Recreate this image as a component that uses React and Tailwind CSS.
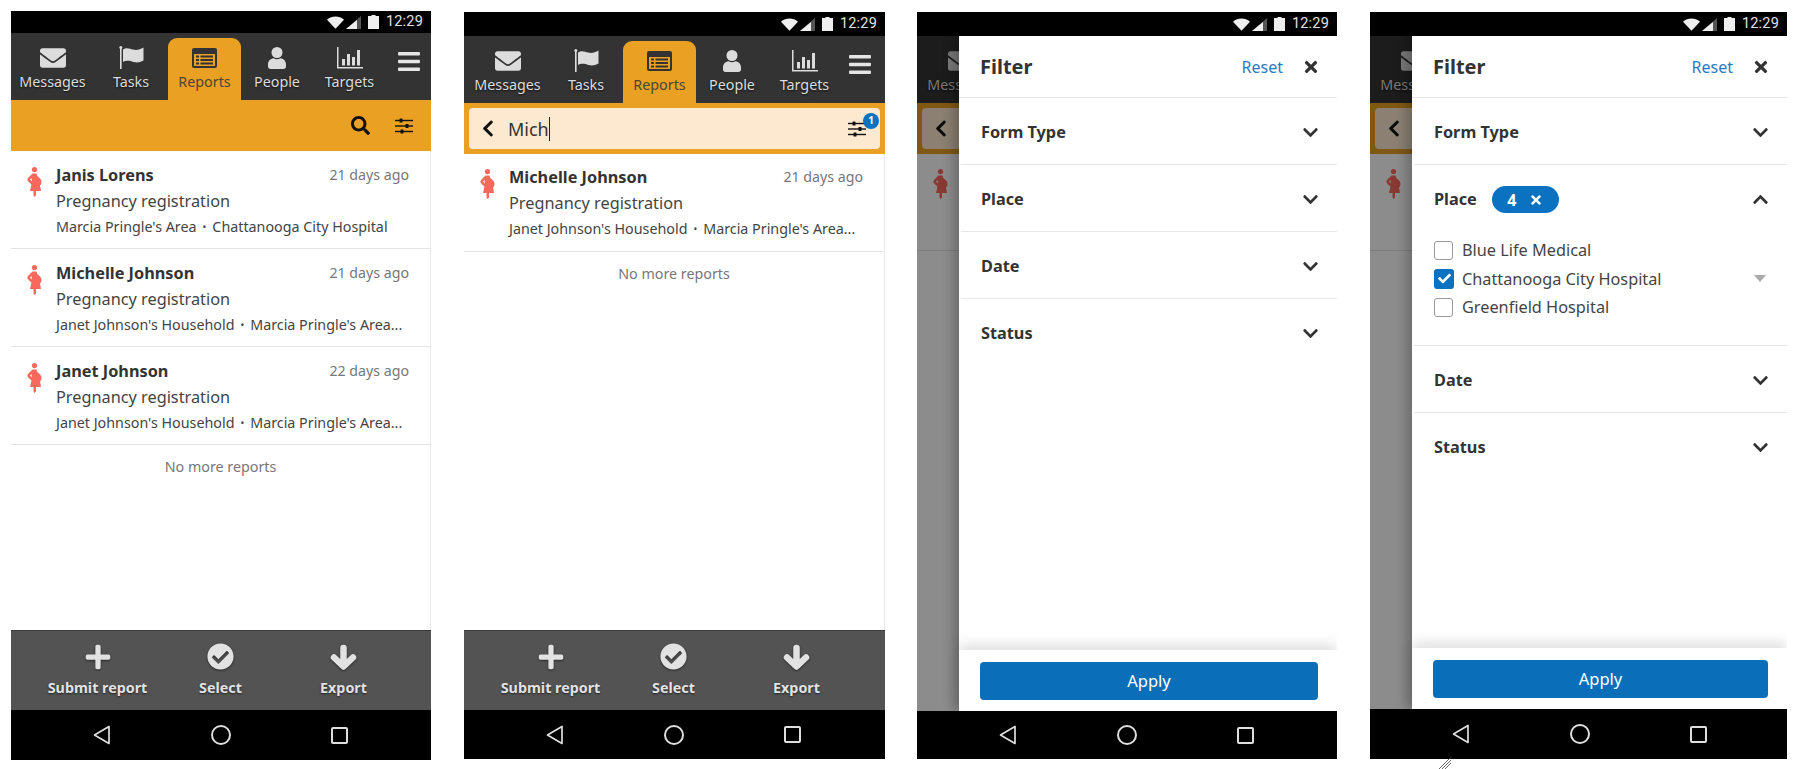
import { FaBars, FaCheck, FaCheckCircle, FaChevronDown, FaChevronLeft, FaChevronUp, FaEnvelope, FaPlus, FaSearch, FaTimes } from "react-icons/fa";

const TABS = [
  { label: "Messages", width: "w-[83px]", icon: <FaEnvelope className="w-[26px] h-[26px]" /> },
  { label: "Tasks", width: "w-[74px]", icon: <FlagIcon /> },
  { label: "Reports", width: "w-[73px]", icon: <ReportsIcon /> },
  { label: "People", width: "w-[72px]", icon: <PersonIcon /> },
  { label: "Targets", width: "w-[73px]", icon: <TargetsIcon /> },
];

const JANET_SUB = ["Janet Johnson's Household", "Marcia Pringle's Area..."];

function FlagIcon() {
  return (
    <svg width="25" height="23" viewBox="0 0 25 23" fill="currentColor">
      <rect x="1" y="1" width="1.6" height="22" />
      <circle cx="1.8" cy="1.6" r="1.5" />
      <path d="M4 3.5C8 1 11 3 14 3.6 18 4.4 21 3.6 24.5 1.5V14.5C21 16.5 18 17 14.5 16 11 15 8 14 4 16Z" />
    </svg>
  );
}

function ReportsIcon() {
  return (
    <svg width="25" height="20" viewBox="0 0 25 20">
      <rect width="25" height="20" rx="2" fill="#333" />
      <rect x="2" y="6" width="21" height="12" fill="#e9a023" />
      <g fill="#333">
        <rect x="4" y="7.5" width="3" height="2" />
        <rect x="4" y="11" width="3" height="2" />
        <rect x="4" y="14.5" width="3" height="2" />
        <rect x="8.5" y="7.5" width="12.5" height="2" />
        <rect x="8.5" y="11" width="12.5" height="2" />
        <rect x="8.5" y="14.5" width="12.5" height="2" />
      </g>
    </svg>
  );
}

function PersonIcon() {
  return (
    <svg width="18" height="22" viewBox="0 0 18 22" fill="currentColor">
      <circle cx="9" cy="5.5" r="5.5" />
      <path d="M5.5 11.2C7.5 12.6 10.5 12.6 12.5 11.2 15.8 11.8 18 14 18 17.5V19.5C18 21 17 22 15.5 22H2.5C1 22 0 21 0 19.5V17.5C0 14 2.2 11.8 5.5 11.2Z" />
    </svg>
  );
}

function TargetsIcon() {
  return (
    <svg width="26" height="22" viewBox="0 0 26 22" fill="currentColor">
      <rect x="0" y="0" width="1.5" height="21" />
      <rect x="0" y="20" width="26" height="1.5" />
      <rect x="5" y="12" width="3" height="6.5" />
      <rect x="10" y="7" width="3" height="11.5" />
      <rect x="15" y="10" width="3" height="8.5" />
      <rect x="20" y="3" width="3" height="15.5" />
    </svg>
  );
}

function ArrowIcon() {
  return (
    <svg width="27" height="26" viewBox="0 0 27 26" fill="none" stroke="currentColor" strokeWidth="6.5" strokeLinecap="round" strokeLinejoin="round">
      <path d="M13.5 4V21M4 13.5L13.5 22.5 23 13.5" />
    </svg>
  );
}

function SlidersIcon() {
  return (
    <svg width="18" height="16" viewBox="0 0 18 16" fill="#111">
      <rect y="1.8" width="18" height="1.4" />
      <rect y="7.3" width="18" height="1.4" />
      <rect y="12.8" width="18" height="1.4" />
      <rect x="4.5" y="0.5" width="3" height="4" rx="0.5" />
      <rect x="10.5" y="6" width="3" height="4" rx="0.5" />
      <rect x="5.5" y="11.5" width="3" height="4" rx="0.5" />
    </svg>
  );
}

function PregnantIcon() {
  return (
    <svg width="15" height="30" viewBox="0 0 15 30" fill="#f7695c">
      <circle cx="7.5" cy="2.6" r="2.6" />
      <path d="M5.5 6.5H9.5C10 8.5 10.5 9.5 12 10.5 15 12.5 15.2 16.5 13 18.5L14 24H9V28.5L7.5 30 6.5 28.5V24H3L4.5 17.5C2.5 16 0 14 0.3 12.6 1 10.5 3.5 8.5 5.5 6.5ZM4.5 11L3 12.6 5 14.4Z" fillRule="evenodd" />
    </svg>
  );
}

function StatusBar({ height }) {
  return (
    <div className={`${height} bg-black shrink-0 flex items-center justify-end gap-[2px] pr-[8px] text-[#e2e2e2]`}>
      <svg width="17" height="13" viewBox="0 0 18 13" fill="#eee">
        <path d="M0 3.5C5 -1 13 -1 18 3.5L9 13Z" />
      </svg>
      <svg width="15" height="13" viewBox="0 0 15 13" className="mr-[5px]">
        <path d="M15 0V13H0Z" fill="#555" />
        <path d="M11 4V13H0Z" fill="#eee" />
      </svg>
      <svg width="11" height="14" viewBox="0 0 11 14" fill="#eee" className="mr-[5px]">
        <path d="M3.5 0H7.5V1H11V14H0V1H3.5Z" />
      </svg>
      <span className="font-['Roboto',sans-serif] text-[14.5px] leading-none tracking-[0.2px]">12:29</span>
    </div>
  );
}

function NavTab({ tab }) {
  const active = tab.label === "Reports";
  return (
    <div className={`${tab.width} shrink-0 flex flex-col items-center justify-end pb-[8px] ${active ? "bg-[#e9a023] rounded-t-[9px] mt-[5px] text-[#4b4636]" : "text-[#dcdcdc]"}`}>
      <div className="h-[23px] flex items-center justify-center">{tab.icon}</div>
      <span className={`text-[14.3px] leading-[20px] mt-[3px] ${active ? "" : "[text-shadow:0_1px_2px_rgba(0,0,0,0.7)]"}`}>{tab.label}</span>
    </div>
  );
}

function TopNav({ shifted }) {
  return (
    <div className={`h-[67px] bg-[#333333] shrink-0 flex items-stretch ${shifted ? "pl-[2px]" : ""}`}>
      {TABS.map((tab) => (
        <NavTab key={tab.label} tab={tab} />
      ))}
      <div className={`flex-1 flex justify-center pt-[16px] text-[#e6e6e6] ${shifted ? "pr-[7px]" : ""}`}>
        <FaBars className="w-[22px] h-[25px]" />
      </div>
    </div>
  );
}

function ActionBar() {
  const items = [
    { label: "Submit report", icon: <FaPlus className="w-[28px] h-[28px]" /> },
    { label: "Select", icon: <FaCheckCircle className="w-[27px] h-[27px]" /> },
    { label: "Export", icon: <ArrowIcon /> },
  ];
  return (
    <div className="h-[80px] shrink-0 bg-[#535353] border-t border-[#3c3c3c] flex pl-[25px]">
      {items.map((item) => (
        <div key={item.label} className="w-[123px] flex flex-col items-center pt-[12px] text-[#e2e2e2] [text-shadow:0_1px_2px_rgba(0,0,0,0.6)]">
          <div className="h-[27px] flex items-center justify-center drop-shadow-[0_1px_1px_rgba(0,0,0,0.5)]">{item.icon}</div>
          <span className="text-[14.3px] font-bold leading-[20px] mt-[8px] whitespace-nowrap">{item.label}</span>
        </div>
      ))}
    </div>
  );
}

function SoftNav({ height }) {
  return (
    <div className={`${height} bg-black shrink-0 flex items-center pl-[31px]`}>
      <div className="w-[119px] flex justify-center">
        <svg width="18" height="20" viewBox="0 0 18 20" fill="none" stroke="#dedede" strokeWidth="1.7" strokeLinejoin="round">
          <path d="M16 1.5V18.5L1.5 10Z" />
        </svg>
      </div>
      <div className="w-[119px] flex justify-center">
        <div className="w-[20px] h-[20px] rounded-full border-[2px] border-[#dedede]" />
      </div>
      <div className="w-[119px] flex justify-center">
        <div className="w-[17px] h-[17px] rounded-[2px] border-[2px] border-[#dedede]" />
      </div>
    </div>
  );
}

function ReportRow({ name, date, sub, compact }) {
  return (
    <div className={`shrink-0 border-b border-[#e4e4e4] flex pl-[16px] pr-[21px] ${compact ? "h-[98px] pt-[12px]" : "h-[98px] pt-[13px]"}`}>
      <div className="w-[29px] shrink-0 pt-[3px]">
        <PregnantIcon />
      </div>
      <div className="flex-1 min-w-0">
        <div className="flex items-center justify-between h-[22px]">
          <span className="text-[16.3px] font-bold text-[#333] leading-[22px]">{name}</span>
          <span className="text-[14.2px] text-[#777] leading-[22px]">{date}</span>
        </div>
        <div className="text-[16.3px] text-[#444] leading-[22px] mt-[4px]">Pregnancy registration</div>
        <div className="text-[14.3px] text-[#444] leading-[20px] mt-[5px] whitespace-nowrap flex items-center">
          <span>{sub[0]}</span>
          <span className="mx-[6px] text-[10px]">•</span>
          <span>{sub[1]}</span>
        </div>
      </div>
    </div>
  );
}

function NoMore() {
  return <div className="text-center text-[14.3px] text-[#777] leading-[20px] pt-[12px]">No more reports</div>;
}

function OrangeBand() {
  return (
    <div className="h-[51px] shrink-0 bg-[#e9a023] flex items-center justify-end pr-[18px] gap-[25px]">
      <FaSearch className="w-[19px] h-[19px] text-[#111]" />
      <SlidersIcon />
    </div>
  );
}

function SearchBand({ children }) {
  return (
    <div className="h-[51px] shrink-0 bg-[#e9a023] p-[5px]">
      <div className="h-[41px] rounded-[4px] bg-[#fde9d0] flex items-center pl-[12px] pr-[14px]">
        <FaChevronLeft className="w-[14px] h-[19px] text-[#111] shrink-0" />
        {children}
      </div>
    </div>
  );
}

function FilterRow({ label, extra, open, children }) {
  const Chevron = open ? FaChevronUp : FaChevronDown;
  return (
    <div className="border-b border-[#e6e6e6] ml-[2px] last:border-b-0">
      <div className="h-[66px] flex items-center pl-[20px] pr-[18px] pt-[3px]">
        <span className="text-[16.3px] font-bold text-[#333]">{label}</span>
        {extra}
        <Chevron className="ml-auto w-[17px] h-[17px] text-[#333]" />
      </div>
      {children}
    </div>
  );
}

function PlaceOption({ label, checked, caret }) {
  return (
    <div className="h-[28.5px] flex items-center pl-[20px] pr-[21px]">
      {checked ? (
        <span className="w-[20px] h-[20px] rounded-[3px] bg-[#0a72c0] flex items-center justify-center mr-[8px]">
          <FaCheck className="w-[13px] h-[13px] text-white" />
        </span>
      ) : (
        <span className="w-[19px] h-[19px] rounded-[3px] border-[1.5px] border-[#9a9a9a] mr-[9px]" />
      )}
      <span className="text-[16.3px] text-[#444]">{label}</span>
      {caret && <span className="ml-auto w-0 h-0 border-x-[6px] border-x-transparent border-t-[7px] border-t-[#aaaaaa]" />}
    </div>
  );
}

// what still shows of the reports page left of the drawer
function Backdrop() {
  return (
    <div className="relative w-[42px] shrink-0 overflow-hidden bg-white">
      <div className="h-[67px] w-[420px] bg-[#333333] flex pl-[2px]">
        <NavTab tab={TABS[0]} />
      </div>
      <div className="w-[420px]">
        <SearchBand />
      </div>
      <div className="h-[97px] border-b border-[#e4e4e4] pl-[16px] pt-[15px]">
        <PregnantIcon />
      </div>
      <div className="absolute inset-0 bg-black/45" />
    </div>
  );
}

function FilterDrawer({ place }) {
  return (
    <div className="relative flex-1 min-w-0 bg-white flex flex-col shadow-[-6px_0_10px_rgba(0,0,0,0.22)]">
      <div className="h-[62px] shrink-0 border-b border-[#e6e6e6] flex items-center pl-[21px] pr-[17px]">
        <span className="text-[20px] font-bold text-[#333]">Filter</span>
        <span className="ml-auto text-[16px] text-[#2e7abf]">Reset</span>
        <FaTimes className="ml-[19px] w-[18px] h-[18px] text-[#333]" />
      </div>
      <div className="flex-1 min-h-0">
        <FilterRow label="Form Type" />
        {place ? (
          <FilterRow
            label="Place"
            open
            extra={
              <span className="ml-[15px] w-[67px] h-[27px] rounded-full bg-[#0a72c0] text-white text-[16px] font-bold flex items-center justify-center gap-[13px]">
                4 <FaTimes className="w-[14px] h-[14px]" />
              </span>
            }
          >
            <div className="pt-[5px] pb-[23px]">
              <PlaceOption label="Blue Life Medical" />
              <PlaceOption label="Chattanooga City Hospital" checked caret />
              <PlaceOption label="Greenfield Hospital" />
            </div>
          </FilterRow>
        ) : (
          <FilterRow label="Place" />
        )}
        <FilterRow label="Date" />
        <FilterRow label="Status" />
      </div>
      <div className="h-[61px] shrink-0 bg-white pl-[21px] pr-[19px] pt-[12px] shadow-[0_-6px_12px_rgba(0,0,0,0.12)]">
        <div className="h-[38px] rounded-[4px] bg-[#0a6fb8] text-white text-[16.5px] flex items-center justify-center">Apply</div>
      </div>
    </div>
  );
}

function ListBody({ band, children }) {
  return (
    <>
      {band}
      <div className="flex-1 min-h-0 border-r border-[#e8e8e8]">
        {children}
        <NoMore />
      </div>
      <ActionBar />
    </>
  );
}

function Phone({ className, statusHeight, navHeight, children }) {
  return (
    <div className={`${className} shrink-0 flex flex-col`}>
      <StatusBar height={statusHeight} />
      <div className="relative flex-1 min-h-0 flex overflow-hidden bg-white">{children}</div>
      <SoftNav height={navHeight} />
    </div>
  );
}

export default function App() {
  return (
    <div className="relative h-[769px] w-[1800px] overflow-hidden bg-white flex font-['Noto_Sans',sans-serif]">
      <Phone className="ml-[11px] mt-[11px] w-[420px] h-[749px]" statusHeight="h-[22px]" navHeight="h-[50px]">
        <div className="flex-1 min-w-0 flex flex-col">
          <TopNav />
          <ListBody band={<OrangeBand />}>
            <ReportRow name="Janis Lorens" date="21 days ago" sub={["Marcia Pringle's Area", "Chattanooga City Hospital"]} />
            <ReportRow name="Michelle Johnson" date="21 days ago" sub={JANET_SUB} />
            <ReportRow name="Janet Johnson" date="22 days ago" sub={JANET_SUB} />
          </ListBody>
        </div>
      </Phone>

      <Phone className="ml-[33px] mt-[12px] w-[421px] h-[747px]" statusHeight="h-[24px]" navHeight="h-[49px]">
        <div className="flex-1 min-w-0 flex flex-col">
          <TopNav shifted />
          <ListBody
            band={
              <SearchBand>
                <span className="ml-[13px] text-[18px] text-[#333] border-r border-[#222] leading-[24px]">Mich</span>
                <div className="ml-auto relative flex">
                  <SlidersIcon />
                  <span className="absolute -top-[8px] -right-[13px] w-[16px] h-[16px] rounded-full bg-[#0a72c0] text-white text-[10px] font-bold flex items-center justify-center">1</span>
                </div>
              </SearchBand>
            }
          >
            <ReportRow name="Michelle Johnson" date="21 days ago" sub={JANET_SUB} compact />
          </ListBody>
        </div>
      </Phone>

      <Phone className="ml-[32px] mt-[12px] w-[420px] h-[747px]" statusHeight="h-[24px]" navHeight="h-[48px]">
        <Backdrop />
        <FilterDrawer />
      </Phone>

      <Phone className="ml-[33px] mt-[12px] w-[417px] h-[747px]" statusHeight="h-[24px]" navHeight="h-[50px]">
        <Backdrop />
        <FilterDrawer place />
      </Phone>

      {/* window resize grip left in the capture */}
      <svg className="absolute left-[1438px] top-[756px]" width="14" height="13" viewBox="0 0 14 13" stroke="#444" strokeWidth="0.8">
        <path d="M1 13L13 1M4 13L13 4M7 13L13 7" />
      </svg>
    </div>
  );
}
